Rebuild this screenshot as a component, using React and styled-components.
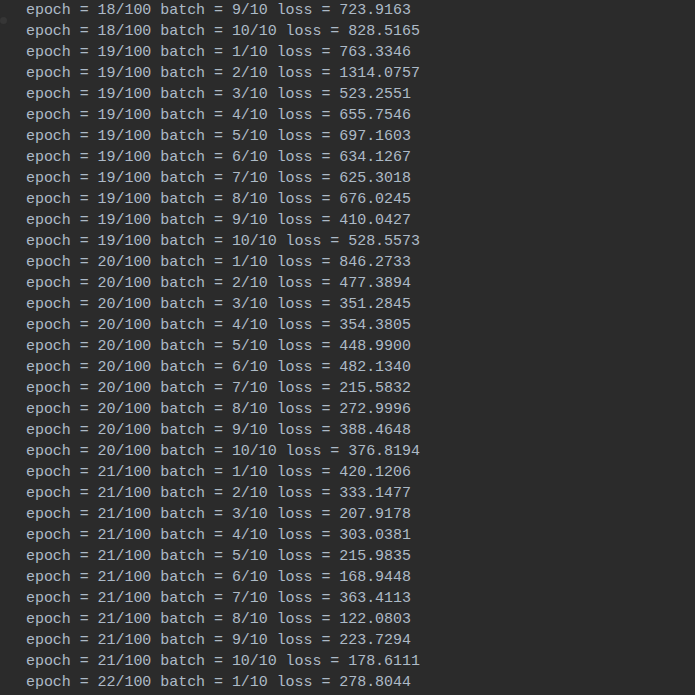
import React from 'react';
import styled, { createGlobalStyle } from 'styled-components';

const GlobalStyle = createGlobalStyle`
  html, body {
    margin: 0;
    padding: 0;
    background: #2b2b2b;
  }
`;

const Console = styled.div`
  width: 695px;
  height: 695px;
  overflow: hidden;
  background: #2b2b2b;
  display: flex;
`;

const Gutter = styled.div`
  width: 26px;
  flex-shrink: 0;
  position: relative;
`;

const FoldMark = styled.span`
  position: absolute;
  left: 0;
  top: 17px;
  width: 7px;
  height: 7px;
  border-radius: 50%;
  background: #363636;
`;

const Output = styled.div`
  font-family: "Liberation Mono", "DejaVu Sans Mono", monospace;
  font-size: 15px;
  line-height: 21px;
  letter-spacing: -0.05px;
  color: #adbac7;
  white-space: pre;
`;

const Line = styled.div`
  height: 21px;
`;

const rows = [
  [18, 9, '723.9163'],
  [18, 10, '828.5165'],
  [19, 1, '763.3346'],
  [19, 2, '1314.0757'],
  [19, 3, '523.2551'],
  [19, 4, '655.7546'],
  [19, 5, '697.1603'],
  [19, 6, '634.1267'],
  [19, 7, '625.3018'],
  [19, 8, '676.0245'],
  [19, 9, '410.0427'],
  [19, 10, '528.5573'],
  [20, 1, '846.2733'],
  [20, 2, '477.3894'],
  [20, 3, '351.2845'],
  [20, 4, '354.3805'],
  [20, 5, '448.9900'],
  [20, 6, '482.1340'],
  [20, 7, '215.5832'],
  [20, 8, '272.9996'],
  [20, 9, '388.4648'],
  [20, 10, '376.8194'],
  [21, 1, '420.1206'],
  [21, 2, '333.1477'],
  [21, 3, '207.9178'],
  [21, 4, '303.0381'],
  [21, 5, '215.9835'],
  [21, 6, '168.9448'],
  [21, 7, '363.4113'],
  [21, 8, '122.0803'],
  [21, 9, '223.7294'],
  [21, 10, '178.6111'],
  [22, 1, '278.8044'],
];

export default function App() {
  return (
    <>
      <GlobalStyle />
      <Console>
        <Gutter>
          <FoldMark />
        </Gutter>
        <Output>
          {rows.map(([epoch, batch, loss], i) => (
            <Line key={i}>
              {`epoch = ${epoch}/100 batch = ${batch}/10 loss = ${loss}`}
            </Line>
          ))}
        </Output>
      </Console>
    </>
  );
}
